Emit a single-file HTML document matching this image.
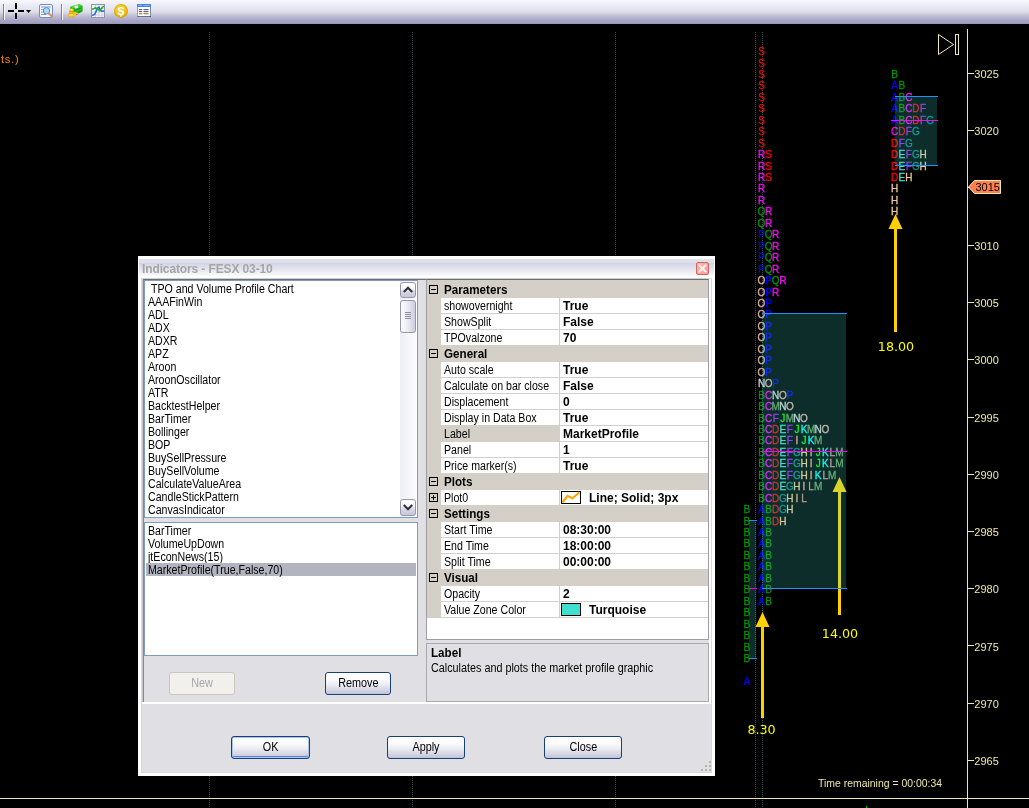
<!DOCTYPE html>
<html lang="en"><head><meta charset="utf-8"><title>Indicators - FESX 03-10</title>
<style>
html,body{margin:0;padding:0;background:#000;overflow:hidden;}
body{width:1029px;height:808px;position:relative;overflow:hidden;font-family:"Liberation Sans",Arial,sans-serif;font-size:11px;color:#000;}
#chart{position:absolute;left:0;top:0;will-change:transform;}
#toolbar{position:absolute;left:0;top:0;width:1029px;height:24px;background:linear-gradient(#f8f8fc 0%,#eeeef8 17%,#e6e6f2 33%,#dedeea 50%,#cdcdde 58%,#b9b7d0 71%,#a8a5c6 85%,#a09ebe 95%,#9694b4 100%);}
#toolbar .sep{position:absolute;top:4px;width:1px;height:16px;background:#7c7c9c;box-shadow:1px 0 0 #fff;}
#toolbar svg{position:absolute;}
/* dialog */
#dlg{will-change:transform;position:absolute;left:138px;top:256px;width:577px;height:520px;background:#e0dfe3;box-sizing:border-box;border:1px solid #fff;box-shadow:inset 0 0 0 2px #fff, inset 0 0 0 3px #d6d6e6;}
#title{position:absolute;left:0;top:0;width:575px;height:21px;background:linear-gradient(#fff 0px,#fff 2px,#e1e1ed 2px,#e0e0ec 6px,#d2d4e4 6px,#d2d4e4 7px,#d5d7e7 7px,#e6e7f0 13px,#fbfbfd 19px,#fff 19.5px,#fff 21px);}
#title span{position:absolute;left:3px;top:5px;font-weight:bold;font-size:12px;line-height:15px;color:#a5a5a5;letter-spacing:-0.12px;white-space:nowrap;}
#close{position:absolute;left:557px;top:5px;width:13px;height:13px;box-sizing:border-box;border:1px solid #d0685c;border-radius:2px;background:linear-gradient(135deg,#fdb4b0,#f79a98);}
#close svg{position:absolute;left:0;top:0;}
.lb{position:absolute;background:#fff;box-sizing:border-box;border:1px solid #7f9db9;overflow:hidden;}
.li{height:13px;line-height:13px;padding-left:3px;white-space:nowrap;position:relative;font-size:12px;}
.li span{display:inline-block;transform:scaleX(0.885);transform-origin:0 50%;position:relative;top:1px;}
.li.sel{background:#b2b4bf;margin:0 1px;padding-left:2px;}
#lpanel{position:absolute;left:4px;top:22px;width:566px;height:424px;box-sizing:border-box;border-left:1px solid #8a8982;border-top:1px solid #716f64;box-shadow:-1px 0 0 #c6c6cc,0 -1px 0 #cdcde0;}
/* property grid */
#pg{position:absolute;left:287px;top:22px;width:283px;height:361px;box-sizing:border-box;border:1px solid #9d9da3;border-top-color:#6f6d63;background:#fff;overflow:hidden;}
#pg .gut{position:absolute;left:0;top:0;width:14px;height:338px;background:#d4d0c8;}
#pg .gtop{position:absolute;left:0;top:0;width:281px;height:2px;background:#d4d0c8;}
.row{position:absolute;left:0;width:281px;height:16px;line-height:17px;white-space:nowrap;}
.row.cat{background:#d4d0c8;font-weight:bold;}
.row .cn{position:absolute;left:17px;top:0;font-size:12px;transform:scaleX(0.97);transform-origin:0 50%;}
.row.prop{left:14px;width:267px;border-bottom:1px solid #d4d0c8;box-sizing:border-box;}
.row.prop .n{position:absolute;left:0;top:0;width:119px;height:15px;padding-left:3px;box-sizing:border-box;border-right:1px solid #d4d0c8;overflow:hidden;font-size:12px;}
.row.prop .n span{display:inline-block;transform:scaleX(0.885);transform-origin:0 50%;}
.row.prop.sel .n{background:#d4d0c8;}
.row.prop .val{position:absolute;left:119px;top:0;right:0;height:15px;font-weight:bold;}
.row .v{position:absolute;left:3px;top:0;font-size:12px;}
.row .v.v2{left:29px;}
.row .sw{position:absolute;left:1px;top:1px;}
.row .cs{position:absolute;left:1px;top:1px;width:20px;height:13px;box-sizing:border-box;border:1px solid #000;background:#40e0d0;}
.pm{position:absolute;left:-12px;top:3px;width:9px;height:9px;box-sizing:border-box;border:1px solid #000;display:block;}
.row.cat .pm{left:2px;top:3px;}
.pm b{position:absolute;left:1px;top:3px;width:5px;height:1px;background:#000;}
.pm u{position:absolute;left:3px;top:1px;width:1px;height:5px;background:#000;}
#desc{position:absolute;left:287px;top:386px;width:283px;height:59px;box-sizing:border-box;border:1px solid #a9a9ae;}
#desc b{position:absolute;left:4px;top:2px;font-size:12px;transform:scaleX(0.97);transform-origin:0 50%;}
#desc span{position:absolute;left:4px;top:17px;white-space:nowrap;font-size:12px;transform:scaleX(0.9);transform-origin:0 50%;}
.btn{position:absolute;box-sizing:border-box;width:78px;height:23px;border:1px solid #173f78;border-radius:3px;background:linear-gradient(#ffffff 0%,#fbfbfd 30%,#ececf3 55%,#d6d6e4 80%,#c2c2d8 100%);text-align:center;line-height:21px;font-size:12px;}
.btn span{display:inline-block;transform:scaleX(0.9);}
.btn.s{width:66px;height:23px;}
.btn.def{width:79px;box-shadow:inset 0 0 0 1px #a9c4f0, inset 0 -1px 0 1px #5b85d6;}
.btn.dis{border-color:#c9c7ba;background:#f1f0ec;color:#a7a6aa;}
#split{position:absolute;left:3px;top:445px;width:569px;height:2px;background:#fff;}
#vsplit{position:absolute;left:570px;top:22px;width:2px;height:425px;background:#fff;}
#grip{position:absolute;left:561px;top:503px;}
/* scrollbar */
#sb{position:absolute;left:255px;top:0px;width:17px;height:236px;background:linear-gradient(90deg,#ecedf6,#fdfdfe);}
.sbb{position:absolute;left:0px;width:16px;height:16px;box-sizing:border-box;border:1px solid #9496ab;border-radius:3px;background:linear-gradient(#ffffff 0%,#f6f6fb 40%,#d9d9e8 60%,#c6c6da 100%);}
.sbb.th{background:linear-gradient(90deg,#fcfcfe 0%,#ececf4 45%,#cdcde0 100%);}
.cA{fill:#0000ff;stroke:#0000ff}
.cB{fill:#009400;stroke:#009400}
.cC{fill:#ff00ff;stroke:#ff00ff}
.cD{fill:#ff0000;stroke:#ff0000}
.cE{fill:#40e0d0;stroke:#40e0d0}
.cF{fill:#a020f0;stroke:#a020f0}
.cG{fill:#008b8b;stroke:#008b8b}
.cH{fill:#f0c891;stroke:#f0c891}
.cI{fill:#f0a08c;stroke:#f0a08c}
.cJ{fill:#00ff00;stroke:#00ff00}
.cK{fill:#00ffff;stroke:#00ffff}
.cL{fill:#d09088;stroke:#d09088}
.cM{fill:#6f9f5f;stroke:#6f9f5f}
.cN{fill:#d3d3d3;stroke:#d3d3d3}
.cO{fill:#dca9a0;stroke:#dca9a0}
.cP{fill:#0000ff;stroke:#0000ff}
.cQ{fill:#009400;stroke:#009400}
.cR{fill:#ff00ff;stroke:#ff00ff}
.cS{fill:#ff0000;stroke:#ff0000}
</style></head>
<body>
<svg id="chart" width="1029" height="808" viewBox="0 0 1029 808">
<rect width="1029" height="808" fill="#000"/>
<line x1="209.5" y1="32" x2="209.5" y2="808" stroke="#2f5555" stroke-width="1" stroke-dasharray="1 1"/>
<line x1="412.5" y1="32" x2="412.5" y2="808" stroke="#2f5555" stroke-width="1" stroke-dasharray="1 1"/>
<line x1="615.5" y1="32" x2="615.5" y2="808" stroke="#2f5555" stroke-width="1" stroke-dasharray="1 1"/>
<line x1="755.5" y1="32" x2="755.5" y2="808" stroke="#2f5555" stroke-width="1" stroke-dasharray="1 1"/>
<line x1="762.5" y1="32" x2="762.5" y2="808" stroke="#2f5555" stroke-width="1" stroke-dasharray="1 1"/>
<polygon points="895.5,214 888.5,229 902.5,229" fill="#ffd000"/><rect x="894" y="228" width="3" height="104" fill="#ffd000"/>
<polygon points="839.5,477 832.5,492 846.5,492" fill="#ffd000"/><rect x="838" y="491" width="3" height="124" fill="#ffd000"/>
<polygon points="762.5,612 755.5,627 769.5,627" fill="#ffd000"/><rect x="761" y="626" width="3" height="92" fill="#ffd000"/>
<g font-family="'Liberation Sans', Arial, sans-serif" font-size="10" text-anchor="middle" stroke-width=".3" transform="scale(1 1.1)">
<text y="466.5"><tspan x="746.8" class="cB">B</tspan></text>
<text y="476.9"><tspan x="746.8" class="cB">B</tspan></text>
<text y="487.3"><tspan x="746.8" class="cB">B</tspan></text>
<text y="497.7"><tspan x="746.8" class="cB">B</tspan></text>
<text y="508.1"><tspan x="746.8" class="cB">B</tspan></text>
<text y="518.5"><tspan x="746.8" class="cB">B</tspan></text>
<text y="528.9"><tspan x="746.8" class="cB">B</tspan></text>
<text y="539.3"><tspan x="746.8" class="cB">B</tspan></text>
<text y="549.7"><tspan x="746.8" class="cB">B</tspan></text>
<text y="560.1"><tspan x="746.8" class="cB">B</tspan></text>
<text y="570.5"><tspan x="746.8" class="cB">B</tspan></text>
<text y="581.0"><tspan x="746.8" class="cB">B</tspan></text>
<text y="591.4"><tspan x="746.8" class="cB">B</tspan></text>
<text y="601.8"><tspan x="746.8" class="cB">B</tspan></text>
<text y="622.6"><tspan x="746.8" class="cA">A</tspan></text>
<text y="50.1"><tspan x="761.5" class="cS">S</tspan></text>
<text y="60.5"><tspan x="761.5" class="cS">S</tspan></text>
<text y="70.9"><tspan x="761.5" class="cS">S</tspan></text>
<text y="81.3"><tspan x="761.5" class="cS">S</tspan></text>
<text y="91.7"><tspan x="761.5" class="cS">S</tspan></text>
<text y="102.1"><tspan x="761.5" class="cS">S</tspan></text>
<text y="112.5"><tspan x="761.5" class="cS">S</tspan></text>
<text y="123.0"><tspan x="761.5" class="cS">S</tspan></text>
<text y="133.4"><tspan x="761.5" class="cS">S</tspan></text>
<text y="143.8"><tspan x="761.5" class="cR">R</tspan><tspan x="768.6" class="cS">S</tspan></text>
<text y="154.2"><tspan x="761.5" class="cR">R</tspan><tspan x="768.6" class="cS">S</tspan></text>
<text y="164.6"><tspan x="761.5" class="cR">R</tspan><tspan x="768.6" class="cS">S</tspan></text>
<text y="175.0"><tspan x="761.5" class="cR">R</tspan></text>
<text y="185.4"><tspan x="761.5" class="cR">R</tspan></text>
<text y="195.8"><tspan x="761.5" class="cQ">Q</tspan><tspan x="768.6" class="cR">R</tspan></text>
<text y="206.2"><tspan x="761.5" class="cQ">Q</tspan><tspan x="768.6" class="cR">R</tspan></text>
<text y="216.6"><tspan x="761.5" class="cP">P</tspan><tspan x="768.6" class="cQ">Q</tspan><tspan x="775.7" class="cR">R</tspan></text>
<text y="227.0"><tspan x="761.5" class="cP">P</tspan><tspan x="768.6" class="cQ">Q</tspan><tspan x="775.7" class="cR">R</tspan></text>
<text y="237.5"><tspan x="761.5" class="cP">P</tspan><tspan x="768.6" class="cQ">Q</tspan><tspan x="775.7" class="cR">R</tspan></text>
<text y="247.9"><tspan x="761.5" class="cP">P</tspan><tspan x="768.6" class="cQ">Q</tspan><tspan x="775.7" class="cR">R</tspan></text>
<text y="258.3"><tspan x="761.5" class="cO">O</tspan><tspan x="768.6" class="cP">P</tspan><tspan x="775.7" class="cQ">Q</tspan><tspan x="782.8" class="cR">R</tspan></text>
<text y="268.7"><tspan x="761.5" class="cO">O</tspan><tspan x="768.6" class="cP">P</tspan><tspan x="775.7" class="cR">R</tspan></text>
<text y="279.1"><tspan x="761.5" class="cO">O</tspan><tspan x="768.6" class="cP">P</tspan></text>
<text y="289.5"><tspan x="761.5" class="cO">O</tspan><tspan x="768.6" class="cP">P</tspan></text>
<text y="299.9"><tspan x="761.5" class="cO">O</tspan><tspan x="768.6" class="cP">P</tspan></text>
<text y="310.3"><tspan x="761.5" class="cO">O</tspan><tspan x="768.6" class="cP">P</tspan></text>
<text y="320.7"><tspan x="761.5" class="cO">O</tspan><tspan x="768.6" class="cP">P</tspan></text>
<text y="331.1"><tspan x="761.5" class="cO">O</tspan><tspan x="768.6" class="cP">P</tspan></text>
<text y="341.5"><tspan x="761.5" class="cO">O</tspan><tspan x="768.6" class="cP">P</tspan></text>
<text y="352.0"><tspan x="761.5" class="cN">N</tspan><tspan x="768.6" class="cO">O</tspan><tspan x="775.7" class="cP">P</tspan></text>
<text y="362.4"><tspan x="761.5" class="cB">B</tspan><tspan x="768.6" class="cC">C</tspan><tspan x="775.7" class="cN">N</tspan><tspan x="782.8" class="cO">O</tspan><tspan x="789.9" class="cP">P</tspan></text>
<text y="372.8"><tspan x="761.5" class="cB">B</tspan><tspan x="768.6" class="cC">C</tspan><tspan x="775.7" class="cM">M</tspan><tspan x="782.8" class="cN">N</tspan><tspan x="789.9" class="cO">O</tspan></text>
<text y="383.2"><tspan x="761.5" class="cB">B</tspan><tspan x="768.6" class="cC">C</tspan><tspan x="775.7" class="cF">F</tspan><tspan x="782.8" class="cJ">J</tspan><tspan x="789.9" class="cM">M</tspan><tspan x="796.9" class="cN">N</tspan><tspan x="804.0" class="cO">O</tspan></text>
<text y="393.6"><tspan x="761.5" class="cB">B</tspan><tspan x="768.6" class="cC">C</tspan><tspan x="775.7" class="cD">D</tspan><tspan x="782.8" class="cE">E</tspan><tspan x="789.9" class="cF">F</tspan><tspan x="796.9" class="cJ">J</tspan><tspan x="804.0" class="cK">K</tspan><tspan x="811.1" class="cM">M</tspan><tspan x="818.2" class="cN">N</tspan><tspan x="825.3" class="cO">O</tspan></text>
<text y="404.0"><tspan x="761.5" class="cB">B</tspan><tspan x="768.6" class="cC">C</tspan><tspan x="775.7" class="cD">D</tspan><tspan x="782.8" class="cE">E</tspan><tspan x="789.9" class="cF">F</tspan><tspan x="796.9" class="cI">I</tspan><tspan x="804.0" class="cJ">J</tspan><tspan x="811.1" class="cK">K</tspan><tspan x="818.2" class="cM">M</tspan></text>
<text y="414.4"><tspan x="761.5" class="cB">B</tspan><tspan x="768.6" class="cC">C</tspan><tspan x="775.7" class="cD">D</tspan><tspan x="782.8" class="cE">E</tspan><tspan x="789.9" class="cF">F</tspan><tspan x="796.9" class="cG">G</tspan><tspan x="804.0" class="cH">H</tspan><tspan x="811.1" class="cI">I</tspan><tspan x="818.2" class="cJ">J</tspan><tspan x="825.3" class="cK">K</tspan><tspan x="832.3" class="cL">L</tspan><tspan x="839.4" class="cM">M</tspan></text>
<text y="424.8"><tspan x="761.5" class="cB">B</tspan><tspan x="768.6" class="cC">C</tspan><tspan x="775.7" class="cD">D</tspan><tspan x="782.8" class="cE">E</tspan><tspan x="789.9" class="cF">F</tspan><tspan x="796.9" class="cG">G</tspan><tspan x="804.0" class="cH">H</tspan><tspan x="811.1" class="cI">I</tspan><tspan x="818.2" class="cJ">J</tspan><tspan x="825.3" class="cK">K</tspan><tspan x="832.3" class="cL">L</tspan><tspan x="839.4" class="cM">M</tspan></text>
<text y="435.2"><tspan x="761.5" class="cB">B</tspan><tspan x="768.6" class="cC">C</tspan><tspan x="775.7" class="cD">D</tspan><tspan x="782.8" class="cE">E</tspan><tspan x="789.9" class="cF">F</tspan><tspan x="796.9" class="cG">G</tspan><tspan x="804.0" class="cH">H</tspan><tspan x="811.1" class="cI">I</tspan><tspan x="818.2" class="cK">K</tspan><tspan x="825.3" class="cL">L</tspan><tspan x="832.3" class="cM">M</tspan></text>
<text y="445.6"><tspan x="761.5" class="cB">B</tspan><tspan x="768.6" class="cC">C</tspan><tspan x="775.7" class="cD">D</tspan><tspan x="782.8" class="cE">E</tspan><tspan x="789.9" class="cG">G</tspan><tspan x="796.9" class="cH">H</tspan><tspan x="804.0" class="cI">I</tspan><tspan x="811.1" class="cL">L</tspan><tspan x="818.2" class="cM">M</tspan></text>
<text y="456.0"><tspan x="761.5" class="cB">B</tspan><tspan x="768.6" class="cC">C</tspan><tspan x="775.7" class="cD">D</tspan><tspan x="782.8" class="cG">G</tspan><tspan x="789.9" class="cH">H</tspan><tspan x="796.9" class="cI">I</tspan><tspan x="804.0" class="cL">L</tspan></text>
<text y="466.5"><tspan x="761.5" class="cA">A</tspan><tspan x="768.6" class="cB">B</tspan><tspan x="775.7" class="cD">D</tspan><tspan x="782.8" class="cG">G</tspan><tspan x="789.9" class="cH">H</tspan></text>
<text y="476.9"><tspan x="761.5" class="cA">A</tspan><tspan x="768.6" class="cB">B</tspan><tspan x="775.7" class="cD">D</tspan><tspan x="782.8" class="cH">H</tspan></text>
<text y="487.3"><tspan x="761.5" class="cA">A</tspan><tspan x="768.6" class="cB">B</tspan></text>
<text y="497.7"><tspan x="761.5" class="cA">A</tspan><tspan x="768.6" class="cB">B</tspan></text>
<text y="508.1"><tspan x="761.5" class="cA">A</tspan><tspan x="768.6" class="cB">B</tspan></text>
<text y="518.5"><tspan x="761.5" class="cA">A</tspan><tspan x="768.6" class="cB">B</tspan></text>
<text y="528.9"><tspan x="761.5" class="cA">A</tspan><tspan x="768.6" class="cB">B</tspan></text>
<text y="539.3"><tspan x="761.5" class="cA">A</tspan><tspan x="768.6" class="cB">B</tspan></text>
<text y="549.7"><tspan x="761.5" class="cA">A</tspan><tspan x="768.6" class="cB">B</tspan></text>
<text y="70.9"><tspan x="894.7" class="cB">B</tspan></text>
<text y="81.3"><tspan x="894.7" class="cA">A</tspan><tspan x="901.8" class="cB">B</tspan></text>
<text y="91.7"><tspan x="894.7" class="cA">A</tspan><tspan x="901.8" class="cB">B</tspan><tspan x="908.9" class="cC">C</tspan></text>
<text y="102.1"><tspan x="894.7" class="cA">A</tspan><tspan x="901.8" class="cB">B</tspan><tspan x="908.9" class="cC">C</tspan><tspan x="916.0" class="cD">D</tspan><tspan x="923.1" class="cF">F</tspan></text>
<text y="112.5"><tspan x="894.7" class="cA">A</tspan><tspan x="901.8" class="cB">B</tspan><tspan x="908.9" class="cC">C</tspan><tspan x="916.0" class="cD">D</tspan><tspan x="923.1" class="cF">F</tspan><tspan x="930.1" class="cG">G</tspan></text>
<text y="123.0"><tspan x="894.7" class="cC">C</tspan><tspan x="901.8" class="cD">D</tspan><tspan x="908.9" class="cF">F</tspan><tspan x="916.0" class="cG">G</tspan></text>
<text y="133.4"><tspan x="894.7" class="cD">D</tspan><tspan x="901.8" class="cF">F</tspan><tspan x="908.9" class="cG">G</tspan></text>
<text y="143.8"><tspan x="894.7" class="cD">D</tspan><tspan x="901.8" class="cE">E</tspan><tspan x="908.9" class="cF">F</tspan><tspan x="916.0" class="cG">G</tspan><tspan x="923.1" class="cH">H</tspan></text>
<text y="154.2"><tspan x="894.7" class="cD">D</tspan><tspan x="901.8" class="cE">E</tspan><tspan x="908.9" class="cF">F</tspan><tspan x="916.0" class="cG">G</tspan><tspan x="923.1" class="cH">H</tspan></text>
<text y="164.6"><tspan x="894.7" class="cD">D</tspan><tspan x="901.8" class="cE">E</tspan><tspan x="908.9" class="cH">H</tspan></text>
<text y="175.0"><tspan x="894.7" class="cH">H</tspan></text>
<text y="185.4"><tspan x="894.7" class="cH">H</tspan></text>
<text y="195.8"><tspan x="894.7" class="cH">H</tspan></text>
</g>
<g fill="#40e0d0" fill-opacity="0.2">
<rect x="762" y="314" width="84" height="275"/>
<rect x="749" y="520" width="7" height="138"/>
<rect x="895" y="97" width="42" height="68"/>
</g>
<rect x="762" y="313" width="85" height="1" fill="#1e90ff"/>
<rect x="762" y="588" width="85" height="1" fill="#1e90ff"/>
<rect x="762" y="451" width="85" height="1" fill="#ff00ff"/>
<rect x="749" y="520" width="8" height="1" fill="#1e90ff"/>
<rect x="749" y="658" width="8" height="1" fill="#1e90ff"/>
<rect x="749" y="588" width="8" height="1" fill="#ff00ff"/>
<rect x="895" y="96" width="43" height="1" fill="#1e90ff"/>
<rect x="895" y="165" width="43" height="1" fill="#1e90ff"/>
<rect x="891" y="120" width="47" height="1" fill="#ff00ff"/>
<g font-family="'DejaVu Sans', 'Liberation Sans', sans-serif" font-size="12.7" fill="#ffff00" text-anchor="middle">
<text x="896" y="351">18.00</text><text x="840" y="638">14.00</text><text x="761.5" y="734">8.30</text>
</g>
<text x="1" y="63" font-family="'Liberation Sans', Arial, sans-serif" font-size="11" letter-spacing=".8" fill="#ff8c00">ts.)</text>
<rect x="967" y="29" width="1" height="779" fill="#eee8aa"/>
<rect x="0" y="798" width="1029" height="1" fill="#eee8aa"/>
<g font-family="'Liberation Sans', Arial, sans-serif" font-size="11" fill="#eee8aa">
<rect x="968" y="760" width="6" height="1" fill="#eee8aa"/><text x="974.3" y="765.0">2965</text>
<rect x="968" y="703" width="6" height="1" fill="#eee8aa"/><text x="974.3" y="707.8">2970</text>
<rect x="968" y="645" width="6" height="1" fill="#eee8aa"/><text x="974.3" y="650.5">2975</text>
<rect x="968" y="588" width="6" height="1" fill="#eee8aa"/><text x="974.3" y="593.2">2980</text>
<rect x="968" y="531" width="6" height="1" fill="#eee8aa"/><text x="974.3" y="536.0">2985</text>
<rect x="968" y="474" width="6" height="1" fill="#eee8aa"/><text x="974.3" y="478.8">2990</text>
<rect x="968" y="417" width="6" height="1" fill="#eee8aa"/><text x="974.3" y="421.5">2995</text>
<rect x="968" y="359" width="6" height="1" fill="#eee8aa"/><text x="974.3" y="364.2">3000</text>
<rect x="968" y="302" width="6" height="1" fill="#eee8aa"/><text x="974.3" y="307.0">3005</text>
<rect x="968" y="245" width="6" height="1" fill="#eee8aa"/><text x="974.3" y="249.8">3010</text>
<rect x="968" y="187" width="6" height="1" fill="#eee8aa"/><text x="974.3" y="192.5">3015</text>
<rect x="968" y="130" width="6" height="1" fill="#eee8aa"/><text x="974.3" y="135.2">3020</text>
<rect x="968" y="73" width="6" height="1" fill="#eee8aa"/><text x="974.3" y="78.0">3025</text>
<text x="818" y="787" textLength="124" lengthAdjust="spacingAndGlyphs">Time remaining = 00:00:34</text>
</g>
<polygon points="968.5,187 974.5,180.5 1000.5,180.5 1000.5,193.5 974.5,193.5" fill="#ff7f50" stroke="#eee8aa" stroke-width="1"/>
<text x="975.5" y="191" font-family="'Liberation Sans', Arial, sans-serif" font-size="11" fill="#000">3015</text>
<g fill="none" stroke="#eee8aa" stroke-width="1"><polygon points="938.5,34.5 953.5,44.5 938.5,54.5"/><rect x="955.5" y="34.5" width="3" height="20"/></g>
<rect x="866" y="806" width="1" height="2" fill="#00c000"/>
</svg>
<div id="toolbar">
<div class="sep" style="left:3px"></div>
<svg style="left:8px;top:3px" width="24" height="17" viewBox="0 0 24 17"><path d="M7 0h2v6h-2zM7 10h2v6h-2zM0 7h6v2h-6zM10 7h6v2h-6z" fill="#000"/><path d="M18 7h5l-2.5 3z" fill="#000"/></svg>
<svg style="left:39px;top:4px" width="15" height="15" viewBox="0 0 15 15"><rect x=".5" y=".5" width="13" height="13" rx="1.5" fill="#f4f7ff" stroke="#6f8ed0"/><path d="M2 3h10M2 5.5h3M2 8h3M2 10.5h5" stroke="#8c98b8" stroke-width="1"/><circle cx="7.5" cy="6.8" r="3.2" fill="#a9dcf7" stroke="#5a86b8"/><path d="M10 9.5l3.5 3.5" stroke="#f08a3c" stroke-width="2.2"/></svg>
<div class="sep" style="left:61px"></div>
<svg style="left:67px;top:3px" width="17" height="16" viewBox="0 0 17 16"><path d="M3 4.500l9.500-3 3 1.500v5.500l-7 3.500-5.500-2z" fill="#14a014"/><path d="M3 3.500l9.500-2.500 3 1.500-9.500 3z" fill="#52d82c"/><path d="M6 5.500l9.500-3v1.600l-9.500 3.200zM6.500 8.500l9-3.200v1.500l-8.500 3.400z" fill="#2cc02c"/><path d="M7 3.300l3.500-1 1.200 2.200-3.200 1.200z" fill="#f4e8f4"/><rect x="2" y="6.200" width="4.600" height="7.500" rx="1.200" fill="#f2c21c"/><ellipse cx="4.300" cy="6.600" rx="2.300" ry="1" fill="#fbe06a"/><ellipse cx="7.800" cy="10.800" rx="3.200" ry="1.700" fill="#f6c626"/><ellipse cx="4.200" cy="12.600" rx="3.400" ry="1.900" fill="#eab414"/><ellipse cx="4.200" cy="12.100" rx="2.600" ry="1.200" fill="#f9d848"/><path d="M2 8.500h4.600M2 10.200h4.600" stroke="#d49a0c" stroke-width=".7"/><circle cx="9.800" cy="11.600" r=".7" fill="#d84020"/></svg>
<svg style="left:91px;top:4px" width="15" height="15" viewBox="0 0 15 15"><rect x=".5" y=".5" width="13" height="13" fill="#f6f5fc" stroke="#8e94ae"/><path d="M4.500 1v12M8 1v12M11 1v12M1 4.500h12M1 8h12M1 11h12" stroke="#cfd0e2" stroke-width="1"/><path d="M1.200 11.600l2.800-1.600 2.500-5.800 1.400-1 1.600 3.200 1.400.8 2.100-.3" fill="none" stroke="#1e6ad8" stroke-width="1.500"/><path d="M1.200 5.600l3.300-2 2.200 1.400 1.800 1.600 4.300-4.600" fill="none" stroke="#22b022" stroke-width="1.500"/></svg>
<svg style="left:113px;top:3px" width="16" height="16" viewBox="0 0 16 16"><circle cx="8" cy="7.900" r="7" fill="#d9a204"/><circle cx="7.800" cy="7.600" r="6" fill="#f3c010"/><circle cx="7.300" cy="6.800" r="4.600" fill="#f7cb2c"/><text x="7.900" y="11.600" text-anchor="middle" font-family="'Liberation Sans',Arial,sans-serif" font-weight="bold" font-size="10.500" fill="#fff">S</text><path d="M7.900 11.500v2" stroke="#fff" stroke-width="1.600"/></svg>
<svg style="left:137px;top:4px" width="15" height="14" viewBox="0 0 15 14"><rect x="0" y="0" width="14" height="13" fill="#243c62"/><rect x="0" y="0" width="13.400" height="12.300" fill="#fdfdf0"/><rect x="0" y="0" width="14" height="3" fill="#4682ee"/><path d="M1 1.500h4M6.500 1.500h6" stroke="#8cb0f6" stroke-width="1"/><rect x="0" y="3" width=".800" height="9.500" fill="#7a88b4"/><path d="M2 5.500h3.200M6.500 5.500h5M2 7.500h3.200M6.500 7.500h5M2 9.700h3.200M6.500 9.700h5" stroke="#5560a4" stroke-width="1.100"/><path d="M2 6.500h3.200M6.500 6.500h5M2 8.600h3.200M6.500 8.600h5" stroke="#f6d9a0" stroke-width=".7"/></svg>
</div>
<div id="dlg">
 <div id="title"><span>Indicators - FESX 03-10</span><div id="close"><svg width="11" height="11" viewBox="0 0 11 11"><path d="M2.500 2.500l6 6M8.500 2.500l-6 6" stroke="#fdeceb" stroke-width="2.300" stroke-linecap="round"/></svg></div></div>
 <div id="lpanel"></div>
 <div class="lb" style="left:5px;top:23px;width:274px;height:238px;padding-top:1px">
<div class="li"><span>&nbsp;TPO and Volume Profile Chart</span></div>
<div class="li"><span>AAAFinWin</span></div>
<div class="li"><span>ADL</span></div>
<div class="li"><span>ADX</span></div>
<div class="li"><span>ADXR</span></div>
<div class="li"><span>APZ</span></div>
<div class="li"><span>Aroon</span></div>
<div class="li"><span>AroonOscillator</span></div>
<div class="li"><span>ATR</span></div>
<div class="li"><span>BacktestHelper</span></div>
<div class="li"><span>BarTimer</span></div>
<div class="li"><span>Bollinger</span></div>
<div class="li"><span>BOP</span></div>
<div class="li"><span>BuySellPressure</span></div>
<div class="li"><span>BuySellVolume</span></div>
<div class="li"><span>CalculateValueArea</span></div>
<div class="li"><span>CandleStickPattern</span></div>
<div class="li"><span>CanvasIndicator</span></div>
  <div id="sb">
   <div class="sbb" style="top:1px"><svg width="14" height="14" viewBox="0 0 14 14"><path d="M2.800 9l4.200-4.200 4.200 4.200" fill="none" stroke="#33333b" stroke-width="2.200"/></svg></div>
   <div class="sbb th" style="top:19px;height:33px"><svg width="14" height="31" viewBox="0 0 14 31"><path d="M4 11.500h6M4 13.500h6M4 15.500h6M4 17.500h6" stroke="#8c8ca4" stroke-width="1"/></svg></div>
   <div class="sbb" style="top:218px;height:17px"><svg width="14" height="14" viewBox="0 0 14 14"><path d="M2.800 5l4.200 4.200 4.200-4.200" fill="none" stroke="#33333b" stroke-width="2.200"/></svg></div>
  </div>
 </div>
 <div class="lb" style="left:5px;top:265px;width:274px;height:134px;padding-top:1px">
<div class="li"><span>BarTimer</span></div>
<div class="li"><span>VolumeUpDown</span></div>
<div class="li"><span>jtEconNews(15)</span></div>
<div class="li sel"><span>MarketProfile(True,False,70)</span></div>
 </div>
 <div class="btn s dis" style="left:30px;top:415px"><span>New</span></div>
 <div class="btn s" style="left:186px;top:415px"><span>Remove</span></div>
 <div id="pg"><div class="gut"></div><div class="gtop"></div>
<div class="row cat" style="top:2px"><i class="pm"><b></b></i><span class="cn">Parameters</span></div>
<div class="row prop" style="top:18px"><span class="n"><span>showovernight</span></span><span class="val"><span class="v">True</span></span></div>
<div class="row prop" style="top:34px"><span class="n"><span>ShowSplit</span></span><span class="val"><span class="v">False</span></span></div>
<div class="row prop" style="top:50px"><span class="n"><span>TPOvalzone</span></span><span class="val"><span class="v">70</span></span></div>
<div class="row cat" style="top:66px"><i class="pm"><b></b></i><span class="cn">General</span></div>
<div class="row prop" style="top:82px"><span class="n"><span>Auto scale</span></span><span class="val"><span class="v">True</span></span></div>
<div class="row prop" style="top:98px"><span class="n"><span>Calculate on bar close</span></span><span class="val"><span class="v">False</span></span></div>
<div class="row prop" style="top:114px"><span class="n"><span>Displacement</span></span><span class="val"><span class="v">0</span></span></div>
<div class="row prop" style="top:130px"><span class="n"><span>Display in Data Box</span></span><span class="val"><span class="v">True</span></span></div>
<div class="row prop sel" style="top:146px"><span class="n"><span>Label</span></span><span class="val"><span class="v">MarketProfile</span></span></div>
<div class="row prop" style="top:162px"><span class="n"><span>Panel</span></span><span class="val"><span class="v">1</span></span></div>
<div class="row prop" style="top:178px"><span class="n"><span>Price marker(s)</span></span><span class="val"><span class="v">True</span></span></div>
<div class="row cat" style="top:194px"><i class="pm"><b></b></i><span class="cn">Plots</span></div>
<div class="row prop" style="top:210px"><i class="pm"><b></b><u></u></i><span class="n"><span>Plot0</span></span><span class="val"><svg class="sw" width="20" height="13" viewBox="0 0 20 13"><rect x=".5" y=".5" width="19" height="12" fill="#fff" stroke="#000"/><polyline points="1.500,11.500 6.500,4.800 11.500,7.200 18.500,1.200" fill="none" stroke="#ffa500" stroke-width="2.100"/></svg><span class="v v2">Line; Solid; 3px</span></span></div>
<div class="row cat" style="top:226px"><i class="pm"><b></b></i><span class="cn">Settings</span></div>
<div class="row prop" style="top:242px"><span class="n"><span>Start Time</span></span><span class="val"><span class="v">08:30:00</span></span></div>
<div class="row prop" style="top:258px"><span class="n"><span>End Time</span></span><span class="val"><span class="v">18:00:00</span></span></div>
<div class="row prop" style="top:274px"><span class="n"><span>Split Time</span></span><span class="val"><span class="v">00:00:00</span></span></div>
<div class="row cat" style="top:290px"><i class="pm"><b></b></i><span class="cn">Visual</span></div>
<div class="row prop" style="top:306px"><span class="n"><span>Opacity</span></span><span class="val"><span class="v">2</span></span></div>
<div class="row prop" style="top:322px"><span class="n"><span>Value Zone Color</span></span><span class="val"><span class="cs"></span><span class="v v2">Turquoise</span></span></div>
 </div>
 <div id="desc"><b>Label</b><span>Calculates and plots the market profile graphic</span></div>
 <div id="split"></div><div id="vsplit"></div>
 <div class="btn def" style="left:92px;top:479px"><span>OK</span></div>
 <div class="btn" style="left:248px;top:479px"><span>Apply</span></div>
 <div class="btn" style="left:405px;top:479px"><span>Close</span></div>
 <svg id="grip" width="12" height="12" viewBox="0 0 12 12"><path d="M9 1h2v2h-2zM5 5h2v2h-2zM9 5h2v2h-2zM1 9h2v2h-2zM5 9h2v2h-2zM9 9h2v2h-2z" fill="#b8b4a0"/></svg>
</div>

</body></html>
